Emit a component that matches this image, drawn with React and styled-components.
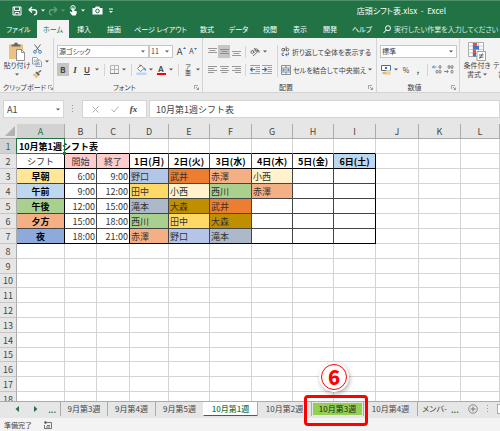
import React from "react";
import styled, { createGlobalStyle, ThemeProvider } from "styled-components";

const theme = {
	green: "#217346",
	ribbon: "#f3f3f3",
	chrome: "#e6e6e6",
	line: "#d4d4d4",
	header: "#ababab",
	selected: "#d2d2d2",
	pressed: "#c5c5c5",
	text: "#444444",
	red: "#ff0000"
};

const GlobalStyle = createGlobalStyle`
	* {
		box-sizing: border-box;
	}
	body {
		margin: 0;
		background: #ffffff;
		font-family: "Noto Sans CJK JP", "Noto Sans", sans-serif;
		font-size: 9px;
		color: #444444;
	}
	button, input, select {
		margin: 0;
		padding: 0;
		border: 0;
		border-radius: 0;
		outline: none;
		background: none;
		font: inherit;
		color: inherit;
	}
	svg {
		display: block;
		flex: none;
	}
`;

const Window = styled.div`
	display: flex;
	flex-direction: column;
	height: 100vh;
	overflow: hidden;
`;

/* Title bar */

const TitleBar = styled.header`
	flex: none;
	display: flex;
	align-items: center;
	height: 20px;
	padding: 0 54px 0 11px;
	border-top: 1px solid #4d9069;
	background: ${props => props.theme.green};
	color: #ffffff;
	font-size: 7px;
	font-feature-settings: "palt";
`;

const QuickAccess = styled.div`
	display: flex;
	gap: 4px;
`;

const Title = styled.h1`
	margin: 0 0 0 auto;
	font-size: 8px;
	font-weight: normal;
	white-space: nowrap;
`;

const ToolSet = styled.div`
	display: flex;
	align-items: center;
`;

const Tool = styled.button`
	flex: none;
	display: flex;
	align-items: center;
	justify-content: center;
	width: 12px;
	height: 13px;
	background: ${props => props.$pressed ? props.theme.pressed : "none"};
	opacity: ${props => props.$disabled ? 0.3 : 1};
`;

const CaretButton = styled(Tool)`
	width: 8px;
`;

/* Ribbon tabs */

const TabBar = styled.nav`
	flex: none;
	display: flex;
	height: 18px;
	background: ${props => props.theme.green};
	color: #ffffff;
	font-size: 7px;
	font-feature-settings: "palt";
`;

const RibbonTab = styled.button`
	flex: none;
	width: ${props => props.$width || 30}px;
	background: ${props => props.$active ? props.theme.ribbon : "none"};
	color: ${props => props.$active ? props.theme.green : "#ffffff"};
	text-align: center;
	white-space: nowrap;
`;

const TellMe = styled.label`
	flex: 1;
	display: flex;
	align-items: center;
	gap: 3px;
	min-width: 0;
	padding-left: 4px;
`;

const TellMeInput = styled.input`
	flex: 1;
	min-width: 0;
	font-feature-settings: "palt";
	&::placeholder {
		color: #dcebe2;
		opacity: 1;
	}
`;

/* Ribbon */

const Ribbon = styled.section`
	flex: none;
	display: flex;
	height: 55px;
	overflow: hidden;
	background: ${props => props.theme.ribbon};
	border-bottom: 1px solid ${props => props.theme.line};
	font-size: 7px;
	font-feature-settings: "palt";
`;

const Group = styled.div`
	flex: none;
	display: flex;
	flex-direction: column;
	justify-content: space-between;
	padding: 4px 2px 0 3px;
	border-right: 1px solid ${props => props.theme.line};
	width: ${props => props.$width}px;
`;

const GroupBody = styled.div`
	display: flex;
`;

const Rows = styled.div`
	display: flex;
	flex-direction: column;
	gap: 5px;
	padding-top: 3px;
`;

const IconColumn = styled.div`
	display: flex;
	flex-direction: column;
	justify-content: space-between;
	height: 39px;
`;

const GroupFooter = styled.div`
	display: flex;
	align-items: center;
	height: 10px;
`;

const GroupName = styled.span`
	flex: 1;
	text-align: center;
	line-height: 10px;
	white-space: nowrap;
`;

const Divider = styled.span`
	flex: none;
	width: 1px;
	height: ${props => props.$tall ? 32 : 12}px;
	margin: ${props => props.$tall ? "3px 3px 0 4px" : "0 3px"};
	background: ${props => props.theme.line};
`;

const BigButton = styled.button`
	flex: none;
	display: flex;
	flex-direction: column;
	align-items: center;
	width: ${props => props.$wide ? 48 : 28}px;
	line-height: 9px;
	white-space: nowrap;
`;

const BigLabel = styled.span`
	display: flex;
	align-items: center;
	justify-content: center;
	gap: 2px;
	height: 9px;
`;

const Combo = styled.div`
	flex: none;
	display: flex;
	align-items: center;
	width: ${props => props.$width}px;
	height: 13px;
	padding-right: 3px;
	border: 1px solid #c6c6c6;
	background: #ffffff;
`;

const ComboSelect = styled.select`
	flex: 1;
	min-width: 0;
	height: 11px;
	padding-left: 1px;
	appearance: none;
	font-feature-settings: "palt";
	line-height: 11px;
`;

const SizeTools = styled(ToolSet)`
	margin-left: 2px;
`;

const TextTool = styled.button`
	display: flex;
	align-items: center;
	gap: 2px;
	height: 13px;
	white-space: nowrap;
	font-feature-settings: "palt";
`;

/* Formula bar */

const FormulaBar = styled.section`
	flex: none;
	display: flex;
	padding: 7px 0 6px 3px;
	background: ${props => props.theme.chrome};
`;

const FormulaBox = styled.div`
	flex: ${props => props.$width ? "none" : 1};
	display: flex;
	align-items: center;
	justify-content: space-around;
	width: ${props => props.$width ? `${props.$width}px` : "auto"};
	height: 18px;
	padding: 0 3px;
	border: 1px solid ${props => props.theme.line};
	background: #ffffff;
`;

const Grip = styled.span`
	flex: none;
	display: flex;
	align-items: center;
	justify-content: center;
	width: ${props => props.$width}px;
`;

const BarInput = styled.input`
	flex: 1;
	min-width: 0;
	height: 16px;
	padding-left: ${props => props.$inset || 0}px;
`;

/* Worksheet */

const Sheet = styled.main`
	flex: 1;
	min-height: 0;
	overflow: hidden;
	background: #ffffff;
`;

const Grid = styled.table`
	width: 100%;
	table-layout: fixed;
	border-collapse: separate;
	border-spacing: 0;
	line-height: 13px;
	white-space: nowrap;
`;

const Col = styled.col`
	width: ${props => props.$width ? `${props.$width}px` : "auto"};
`;

const rowHeight = props => props.$short ? 14 : 15;

const HeadCell = styled.th`
	height: ${rowHeight}px;
	padding: 0;
	border-right: 1px solid ${props => props.theme.header};
	border-bottom: 1px solid ${props => props.$selected ? props.theme.green : props.theme.header};
	background: ${props => props.$selected ? props.theme.selected : props.theme.chrome};
	color: ${props => props.$selected ? props.theme.green : props.theme.text};
	font-weight: normal;
`;

const RowHead = styled(HeadCell)`
	border-bottom-color: #c6c6c6;
`;

const Corner = styled(HeadCell)`
	border-right-color: ${props => props.theme.chrome};
	& svg {
		margin: 0 1px 1px auto;
	}
`;

const Cell = styled.td`
	height: ${rowHeight}px;
	padding: 0 1px;
	overflow: hidden;
	border-right: 1px solid ${props => props.$right || props.theme.line};
	border-bottom: 1px solid ${props => props.$bottom || props.theme.line};
	background: ${props => props.$bg || "none"};
	color: ${props => props.$bold ? "#000000" : "#333333"};
	font-weight: ${props => props.$bold ? "bold" : "normal"};
	text-align: ${props => props.$align || "left"};
`;

const ActiveCell = styled(Cell)`
	position: relative;
	overflow: visible;
	padding-left: 2px;
	&::before {
		content: "";
		position: absolute;
		inset: -1px;
		border: 1px solid ${props => props.theme.green};
	}
	&::after {
		content: "";
		position: absolute;
		right: -2px;
		bottom: -2px;
		width: 3px;
		height: 3px;
		background: ${props => props.theme.green};
	}
`;

/* Sheet tabs and status bar */

const SheetBar = styled.nav`
	position: relative;
	flex: none;
	display: flex;
	height: 17px;
	border-top: 1px solid ${props => props.theme.header};
	background: ${props => props.theme.chrome};
	font-size: 8px;
`;

const SheetNav = styled.div`
	flex: none;
	display: flex;
	align-items: center;
	justify-content: space-between;
	width: 60px;
	padding: 0 4px 2px 11px;
	color: ${props => props.theme.green};
`;

const SheetSlot = styled.div`
	position: relative;
	flex: none;
	width: ${props => props.$width}px;
	height: 14px;
	padding: 1px;
	border-left: 1px solid ${props => props.$active ? "#ffffff" : props.theme.header};
	border-bottom: ${props => props.$active ? `1px solid ${props.theme.green}` : "0"};
	background: ${props => props.$active ? "#ffffff" : "none"};
`;

const SheetTab = styled.button`
	display: block;
	width: 100%;
	height: 12px;
	background: ${props => props.$marked ? "#92d050" : "none"};
	color: ${props => props.$active ? props.theme.green : props.$marked ? "#222222" : props.theme.text};
	font-weight: ${props => props.$active ? 500 : "normal"};
	line-height: 12px;
	white-space: nowrap;
	font-feature-settings: ${props => props.$tight ? "\"palt\"" : "normal"};
`;

const SheetTools = styled.div`
	flex: 1;
	display: flex;
	align-items: center;
	gap: 8px;
	padding-bottom: 2px;
	overflow: hidden;
	color: ${props => props.theme.green};
`;

const ScrollButton = styled(Tool)`
	height: 10px;
	border: 1px solid ${props => props.theme.header};
	background: #ffffff;
`;

const Callout = styled.div`
	position: absolute;
	z-index: 1;
	top: -7px;
	left: -8px;
	width: 64px;
	height: 31px;
	border: 3px solid ${props => props.theme.red};
	border-radius: 4px;
	pointer-events: none;
`;

const Badge = styled.div`
	position: absolute;
	z-index: 2;
	top: -40px;
	left: 7px;
	width: 30px;
	height: 30px;
	padding: 2px;
	border-radius: 50%;
	background: #ffffff;
	box-shadow: 1px 2px 4px rgba(0, 0, 0, 0.3);
	pointer-events: none;
`;

const BadgeRing = styled.div`
	height: 26px;
	border: 1px solid ${props => props.theme.red};
	border-radius: 50%;
	color: ${props => props.theme.red};
	font-size: 20px;
	font-weight: 900;
	line-height: 23px;
	text-align: center;
`;

const StatusBar = styled.footer`
	flex: none;
	display: flex;
	align-items: center;
	gap: 12px;
	height: 13px;
	padding-left: 4px;
	background: ${props => props.theme.ribbon};
	font-size: 7px;
`;

/* Icons */

const Caret = ({ color = "#555555" }) => (
	<svg width="4" height="3" viewBox="0 0 4 3"><path d="M0 0.5h4L2 2.5z" fill={color} /></svg>
);

const GripDots = () => (
	<svg width="2" height="8" viewBox="0 0 2 8" fill="#999999"><path d="M0 0h1v1H0zM0 3h1v1H0zM0 6h1v1H0z" /></svg>
);

const Launcher = () => (
	<svg width="5" height="5" viewBox="0 0 5 5" fill="none" stroke="#777777" strokeWidth="0.7">
		<path d="M0.4 4V0.4H4M2 2l2.4 2.4M4.5 2.5v2h-2" />
	</svg>
);

const SaveIcon = () => (
	<svg width="10" height="10" viewBox="0 0 10 10" fill="none" stroke="#ffffff">
		<path d="M1 1h8v8H1zM2.5 1v3.5h5V1M3 9V6.5h4V9" />
	</svg>
);

const UndoIcon = () => (
	<svg width="10" height="10" viewBox="0 0 10 10" fill="none" stroke="#ffffff" strokeWidth="1.4">
		<path d="M4 1L1.2 3.7 4 6.4M1.5 3.7H6a2.6 2.6 0 0 1 0 5.2" />
	</svg>
);

const RedoIcon = () => (
	<svg width="10" height="10" viewBox="0 0 10 10" fill="none" stroke="#ffffff" strokeWidth="1.4">
		<path d="M6 1l2.8 2.7L6 6.4M8.5 3.7H4a2.6 2.6 0 0 0 0 5.2" />
	</svg>
);

const TouchIcon = () => (
	<svg width="9" height="11" viewBox="0 0 9 11">
		<circle cx="4" cy="2.8" r="2.2" fill="none" stroke="#ffffff" />
		<path d="M3.2 2.5h1.5v3l3 0.8v2L6.5 10.5H3.2L0.6 7l1-0.6 1.6 1z" fill="#ffffff" />
	</svg>
);

const CameraIcon = () => (
	<svg width="11" height="9" viewBox="0 0 11 9">
		<path d="M0.5 2h2.3L4 0.5h3L8.2 2h2.3v6.5h-10z" fill="#ffffff" />
		<circle cx="5.5" cy="5" r="1.8" fill="none" stroke="#217346" />
	</svg>
);

const CustomizeIcon = () => (
	<svg width="4" height="6" viewBox="0 0 4 6" fill="#ffffff"><path d="M0 0.5h4v1H0zM0 3h4L2 5z" /></svg>
);

const SearchIcon = () => (
	<svg width="8" height="9" viewBox="0 0 8 9" fill="none" stroke="#ffffff">
		<circle cx="5" cy="3.2" r="2.5" /><path d="M3.2 5L0.6 8" />
	</svg>
);

const PasteIcon = () => (
	<svg width="18" height="19" viewBox="0 0 18 19">
		<path d="M1 2.5h14V17H1z" fill="#eac282" />
		<path d="M3.5 4.5v-2H6a2 2 0 0 1 4 0h2.5v2z" fill="#666666" />
		<path d="M8.5 7.5h5l3 3v8h-8z" fill="#ffffff" stroke="#777777" strokeWidth="0.8" />
		<path d="M13.5 7.5v3h3" fill="none" stroke="#777777" strokeWidth="0.8" />
	</svg>
);

const CutIcon = () => (
	<svg width="9" height="10" viewBox="0 0 9 10" fill="none">
		<path d="M1.5 0.5l4.8 6.3M7.5 0.5L2.7 6.8" stroke="#666666" />
		<circle cx="2" cy="7.8" r="1.4" stroke="#4a7ebb" /><circle cx="7" cy="7.8" r="1.4" stroke="#4a7ebb" />
	</svg>
);

const CopyIcon = () => (
	<svg width="10" height="10" viewBox="0 0 10 10" fill="#ffffff" stroke="#7f8a96" strokeWidth="0.8">
		<path d="M0.5 0.5h4l1.5 1.5v5h-5.5zM4 3h3.5l2 2v4.5H4z" />
		<path d="M5.2 6h3M5.2 7.7h3M1.6 3h1.6M1.6 4.7h1.6" stroke="#4a7ebb" strokeWidth="0.6" />
	</svg>
);

const BrushIcon = () => (
	<svg width="10" height="9" viewBox="0 0 10 9">
		<path d="M0.5 4.5L3.5 3 6.5 6 4.5 8.5z" fill="#eac282" />
		<path d="M3.5 2.5l1.3-1 3 3-1.2 1.3z" fill="#555555" /><path d="M6.5 2.5L9 0.5" stroke="#666666" strokeWidth="1.5" />
	</svg>
);

const BoldIcon = styled.b`
	font-family: Inter, sans-serif;
	font-size: 8px;
`;

const ItalicIcon = styled.i`
	font-family: "Liberation Serif", serif;
	font-size: 9px;
	font-weight: bold;
`;

const UnderlineIcon = styled.u`
	font-family: Inter, sans-serif;
	font-size: 8px;
	font-weight: 600;
`;

const BordersIcon = () => (
	<svg width="9" height="9" viewBox="0 0 9 9" fill="none" stroke="#b4b4b4">
		<path d="M0.5 0.5h8v8h-8zM4.5 0.5v8M0.5 4.5h8" /><path d="M0 8.5h9" stroke="#888888" />
	</svg>
);

const FillIcon = () => (
	<svg width="11" height="11" viewBox="0 0 11 11">
		<path d="M1.5 4.5L5 1l3 3.5L4.5 7.5z" fill="#ffffff" stroke="#666666" strokeWidth="0.8" />
		<path d="M4 3V0.5" stroke="#666666" strokeWidth="0.8" /><path d="M8.2 3.5c2 1 1.8 2.5 1.4 3.5-0.8 0-1.4-1.5-1.4-3.5z" fill="#2f75b5" />
		<path d="M0.5 8.5h10V11h-10z" fill="#bdd7ee" />
	</svg>
);

const FontColorTool = styled.span`
	display: flex;
	align-items: center;
	justify-content: center;
	width: 9px;
	height: 11px;
	border-bottom: 2px solid ${props => props.theme.red};
	font-family: Inter, sans-serif;
	font-size: 8px;
	font-weight: 600;
`;

const FontSizeMark = styled.span`
	display: flex;
	font-family: Inter, sans-serif;
	font-size: ${props => props.$small ? 7 : 9}px;
`;

const SizeArrow = ({ down }) => (
	<svg width="3" height="4" viewBox="0 0 3 4"><path d={down ? "M0 1h3L1.5 3z" : "M0 3h3L1.5 1z"} fill="#2f75b5" /></svg>
);

const PhoneticIcon = styled.span`
	width: 6px;
	font-size: 6px;
	font-feature-settings: normal;
	line-height: 6px;
	word-break: break-all;
`;

const linePaths = {
	top: "M0 1.5h9M1.5 3.5h6M0 5.5h9",
	middle: "M0 2.5h9M1.5 4.5h6M0 6.5h9",
	bottom: "M0 4.5h9M1.5 6.5h6M0 8.5h9",
	left: "M0 1.5h9M0 3.5h6M0 5.5h9M0 7.5h6",
	center: "M0 1.5h9M1.5 3.5h6M0 5.5h9M1.5 7.5h6",
	right: "M0 1.5h9M3 3.5h6M0 5.5h9M3 7.5h6"
};

const LinesIcon = ({ kind }) => (
	<svg width="9" height="10" viewBox="0 0 9 10"><path d={linePaths[kind]} stroke="#808080" strokeWidth="0.8" /></svg>
);

const IndentIcon = ({ increase }) => (
	<svg width="10" height="9" viewBox="0 0 10 9">
		<path d="M0 0.5h10M5.5 2.5H10M5.5 4.5H10M5.5 6.5H10M0 8.5h10" stroke="#888888" strokeWidth="0.8" />
		<path d={increase ? "M0 4.5h4M2.5 2.5l2 2-2 2" : "M5 4.5H1M2.5 2.5l-2 2 2 2"} fill="none" stroke="#2f75b5" strokeWidth="1.2" />
	</svg>
);

const OrientationIcon = () => (
	<svg width="10" height="10" viewBox="0 0 10 10" fill="none" stroke="#666666" strokeWidth="0.9">
		<circle cx="2.3" cy="5" r="1.4" /><path d="M2.5 3l2 2.5M4 1l2.7 3.2" /><circle cx="6.2" cy="3" r="1.3" />
		<path d="M3 9l6-5.5M6.8 3.5H9v2.2" />
	</svg>
);

const WrapIcon = () => (
	<svg width="9" height="11" viewBox="0 0 9 11" fill="none" stroke="#666666" strokeWidth="0.9">
		<circle cx="2" cy="3.7" r="1.3" /><path d="M3.5 2.2V5.2M5.2 0.5v4.7" /><circle cx="6.6" cy="3.7" r="1.3" />
		<path d="M3 7.2H1.2v2.3H3" /><path d="M7.5 6.5v2.2h-3M6 7.2L4.5 8.7 6 10.2" stroke="#2f75b5" />
	</svg>
);

const MergeIcon = () => (
	<svg width="10" height="10" viewBox="0 0 10 10" fill="none" stroke="#777777" strokeWidth="0.8">
		<path d="M0.5 0.5h9v9h-9zM0.5 3h9M0.5 7h9M5 0.5V3M5 7v2.5" />
		<path d="M1.5 5h7M3 4L1.7 5 3 6M7 4l1.3 1L7 6" stroke="#2f75b5" />
	</svg>
);

const CurrencyIcon = () => (
	<svg width="11" height="10" viewBox="0 0 11 10">
		<path d="M0.5 0.5h9v5h-9z" fill="#ffffff" stroke="#2f75b5" /><circle cx="5" cy="3" r="1.2" fill="#2f75b5" />
		<path d="M5 5h4.5v4.5H5z" fill="#eac282" /><ellipse cx="3.5" cy="8" rx="2.3" ry="1.3" fill="#eab464" />
		<path d="M5 6.5h4.5M5 8h4.5" stroke="#ffffff" strokeWidth="0.5" />
	</svg>
);

const DecimalIcon = ({ decrease }) => (
	<svg width="10" height="9" viewBox="0 0 10 9" fill="none" strokeWidth="0.8">
		<path d={decrease ? "M0 6.5h4M2.8 5l1.5 1.5L2.8 8" : "M4.5 2H0.7M2 0.5L0.5 2 2 3.5"} stroke="#2f75b5" />
		<g stroke="#666666">
			<ellipse cx="8" cy="2" rx="1" ry="1.5" /><ellipse cx="8" cy="6.7" rx="1" ry="1.5" />
			<ellipse cx="5" cy={decrease ? 2 : 6.7} rx="1" ry="1.5" />
		</g>
	</svg>
);

const ConditionalIcon = () => (
	<svg width="18" height="19" viewBox="0 0 18 19">
		<path d="M0.5 0.5h15v14h-15z" fill="#ffffff" stroke="#999999" strokeWidth="0.8" />
		<path d="M0.5 4h15M0.5 7.5h15M0.5 11h15M5 0.5v14M10.5 0.5v14" stroke="#aaaaaa" strokeWidth="0.6" />
		<path d="M5 1h4v3H5zM5 7.5h3V11H5z" fill="#e8513d" /><path d="M5 4h6v3.5H5zM5 11h3v3.5H5z" fill="#4472c4" />
		<path d="M9 9.5h8.5v9H9z" fill="#ffffff" stroke="#888888" strokeWidth="0.8" />
		<path d="M11 13h4.5M11 15.2h4.5M14.7 11.3l-3 5.5" stroke="#444444" strokeWidth="0.8" />
	</svg>
);

const TableStyleIcon = () => (
	<svg width="18" height="19" viewBox="0 0 18 19">
		<path d="M0.5 0.5h16v14h-16z" fill="#ffffff" stroke="#999999" strokeWidth="0.8" /><path d="M4 4h12v10H4z" fill="#9dc3e6" />
	</svg>
);

/* Data */

const ribbonTabs = [
	["ファイル", 37], ["ホーム", 32], ["挿入"], ["描画"], ["ページ レイアウト", 63], ["数式"],
	["データ", 33], ["校閲"], ["表示"], ["開発"], ["ヘルプ", 34]
];

const columns = [
	["A", 48], ["B", 32], ["C", 33], ["D", 39], ["E", 41], ["F", 42],
	["G", 41], ["H", 41], ["I", 42], ["J", 43], ["K", 42], ["L"]
];

const staffColors = {
	"野口": "#b4c6e7",
	"武井": "#ed7d31",
	"赤澤": "#f4b084",
	"小西": "#fff2cc",
	"田中": "#ffd966",
	"西川": "#a9d08e",
	"滝本": "#adb9ca",
	"大森": "#bf8f00"
};

const days = ["1日(月)", "2日(火)", "3日(水)", "4日(木)", "5日(金)", "6日(土)"];

const shifts = [
	{ name: "早朝", color: "#ffe699", from: "6:00", to: "9:00", staff: ["野口", "武井", "赤澤", "小西", "", ""] },
	{ name: "午前", color: "#bdd7ee", from: "9:00", to: "12:00", staff: ["田中", "小西", "西川", "赤澤", "", ""] },
	{ name: "午後", color: "#a9d08e", from: "12:00", to: "15:00", staff: ["滝本", "大森", "武井", "", "", ""] },
	{ name: "夕方", color: "#f4b084", from: "15:00", to: "18:00", staff: ["西川", "田中", "大森", "", "", ""] },
	{ name: "夜", color: "#8ea9db", from: "18:00", to: "21:00", staff: ["赤澤", "野口", "滝本", "", "", ""] }
];

const sheets = [
	{ name: "9月第3週", width: 47 },
	{ name: "9月第4週", width: 48 },
	{ name: "9月第5週", width: 48 },
	{ name: "10月第1週", width: 54, active: true },
	{ name: "10月第2週", width: 54 },
	{ name: "10月第3週", width: 52, marked: true },
	{ name: "10月第4週", width: 54 },
	{ name: "メンバ-", width: 34, tight: true }
];

const thin = "#444444";
const thick = "#000000";
const emptyRows = [8, 9, 10, 11, 12, 13, 14, 15, 16, 17, 18];

const Footer = ({ name, launcher = true }) => (
	<GroupFooter>
		<GroupName>{name}</GroupName>
		{launcher && <CaretButton aria-label={`${name}の設定`}><Launcher /></CaretButton>}
	</GroupFooter>
);

const Drop = ({ label, color }) => (
	<CaretButton aria-label={label}><Caret color={color} /></CaretButton>
);

const RibbonPanel = () => (
	<Ribbon>
		<Group $width={54}>
			<GroupBody>
				<BigButton>
					<PasteIcon />
					<BigLabel>貼り付け</BigLabel>
					<BigLabel><Caret /></BigLabel>
				</BigButton>
				<IconColumn>
					<Tool aria-label="切り取り"><CutIcon /></Tool>
					<ToolSet>
						<Tool aria-label="コピー"><CopyIcon /></Tool>
						<Drop label="コピーの種類" />
					</ToolSet>
					<Tool aria-label="書式のコピー"><BrushIcon /></Tool>
				</IconColumn>
			</GroupBody>
			<Footer name="クリップボード" />
		</Group>
		<Group $width={149}>
			<Rows>
				<ToolSet>
					<Combo $width={92}>
						<ComboSelect aria-label="フォント"><option>源ゴシック</option></ComboSelect>
						<Caret />
					</Combo>
					<Combo $width={24}>
						<ComboSelect aria-label="フォント サイズ"><option>11</option></ComboSelect>
						<Caret />
					</Combo>
					<SizeTools>
						<Tool aria-label="拡大"><FontSizeMark>A<SizeArrow /></FontSizeMark></Tool>
						<Tool aria-label="縮小"><FontSizeMark $small>A<SizeArrow down /></FontSizeMark></Tool>
					</SizeTools>
				</ToolSet>
				<ToolSet>
					<Tool aria-label="太字" $pressed><BoldIcon>B</BoldIcon></Tool>
					<Tool aria-label="斜体"><ItalicIcon>I</ItalicIcon></Tool>
					<Tool aria-label="下線"><UnderlineIcon>U</UnderlineIcon></Tool>
					<Drop label="下線の種類" />
					<Divider />
					<Tool aria-label="罫線"><BordersIcon /></Tool>
					<Drop label="罫線の種類" />
					<Divider />
					<Tool aria-label="塗りつぶし"><FillIcon /></Tool>
					<Drop label="塗りつぶしの色" />
					<Tool aria-label="文字色"><FontColorTool>A</FontColorTool></Tool>
					<Drop label="文字の色" />
					<Divider />
					<Tool aria-label="ふりがな"><PhoneticIcon>ア亜</PhoneticIcon></Tool>
					<Drop label="ふりがなの設定" />
				</ToolSet>
			</Rows>
			<Footer name="フォント" />
		</Group>
		<Group $width={174}>
			<GroupBody>
				<Rows>
					<ToolSet>
						<Tool aria-label="上揃え"><LinesIcon kind="top" /></Tool>
						<Tool aria-label="上下中央揃え" $pressed><LinesIcon kind="middle" /></Tool>
						<Tool aria-label="下揃え"><LinesIcon kind="bottom" /></Tool>
						<Divider />
						<Tool aria-label="方向"><OrientationIcon /></Tool>
						<Drop label="方向の種類" />
					</ToolSet>
					<ToolSet>
						<Tool aria-label="左揃え"><LinesIcon kind="left" /></Tool>
						<Tool aria-label="中央揃え"><LinesIcon kind="center" /></Tool>
						<Tool aria-label="右揃え"><LinesIcon kind="right" /></Tool>
						<Divider />
						<Tool aria-label="インデントを減らす"><IndentIcon /></Tool>
						<Tool aria-label="インデントを増やす"><IndentIcon increase /></Tool>
					</ToolSet>
				</Rows>
				<Divider $tall />
				<Rows>
					<TextTool><WrapIcon />折り返して全体を表示する</TextTool>
					<ToolSet>
						<TextTool><MergeIcon />セルを結合して中央揃え</TextTool>
						<Drop label="結合の種類" />
					</ToolSet>
				</Rows>
			</GroupBody>
			<Footer name="配置" />
		</Group>
		<Group $width={83}>
			<Rows>
				<Combo $width={77}>
					<ComboSelect aria-label="表示形式"><option>標準</option></ComboSelect>
					<Caret />
				</Combo>
				<ToolSet>
					<Tool aria-label="通貨"><CurrencyIcon /></Tool>
					<Drop label="通貨の種類" />
					<Tool aria-label="パーセント">%</Tool>
					<Tool aria-label="桁区切り"><b>,</b></Tool>
					<Divider />
					<Tool aria-label="小数点以下を増やす"><DecimalIcon /></Tool>
					<Tool aria-label="小数点以下を減らす"><DecimalIcon decrease /></Tool>
				</ToolSet>
			</Rows>
			<Footer name="数値" />
		</Group>
		<Group $width={160}>
			<GroupBody>
				<BigButton>
					<ConditionalIcon />
					<BigLabel>条件付き</BigLabel>
					<BigLabel>書式<Caret /></BigLabel>
				</BigButton>
				<BigButton $wide>
					<TableStyleIcon />
					<BigLabel>テーブルとして</BigLabel>
					<BigLabel>書式設定<Caret /></BigLabel>
				</BigButton>
			</GroupBody>
			<Footer name="スタイル" launcher={false} />
		</Group>
	</Ribbon>
);

const Worksheet = () => (
	<Sheet>
		<Grid>
			<colgroup>
				<Col $width={17} />
				{columns.map(([name, width]) => <Col key={name} $width={width} />)}
			</colgroup>
			<thead>
				<tr>
					<Corner>
						<svg width="10" height="10" viewBox="0 0 10 10"><path d="M10 0v10H0z" fill="#b2b2b2" /></svg>
					</Corner>
					{columns.map(([name]) => <HeadCell key={name} $selected={name === "A"}>{name}</HeadCell>)}
				</tr>
			</thead>
			<tbody>
				<tr>
					<RowHead $selected>1</RowHead>
					<ActiveCell $bold>10月第1週シフト表</ActiveCell>
					<Cell $right="transparent" $bottom={thick} />
					<Cell $bottom={thick} />
					{days.map(day => <Cell key={day} $bottom={thick} />)}
					<Cell /><Cell /><Cell />
				</tr>
				<tr>
					<RowHead>2</RowHead>
					<Cell $align="center" $right={thick} $bottom={thick}>シフト</Cell>
					<Cell $align="center" $bg="#ffcccc" $right={thin} $bottom={thick}>開始</Cell>
					<Cell $align="center" $bg="#ffcccc" $right={thick} $bottom={thick}>終了</Cell>
					{days.map((day, i) => (
						<Cell key={day} $bold $align="center" $right={i === 5 ? thick : thin} $bottom={thick} $bg={i === 5 ? "#bdd7ee" : null}>
							{day}
						</Cell>
					))}
					<Cell /><Cell /><Cell />
				</tr>
				{shifts.map((shift, row) => {
					const bottom = row === shifts.length - 1 ? thick : thin;
					return (
						<tr key={shift.name}>
							<RowHead>{row + 3}</RowHead>
							<Cell $bold $align="center" $bg={shift.color} $right={thick} $bottom={bottom}>{shift.name}</Cell>
							<Cell $align="right" $right={thin} $bottom={bottom}>{shift.from}</Cell>
							<Cell $align="right" $right={thick} $bottom={bottom}>{shift.to}</Cell>
							{shift.staff.map((name, i) => (
								<Cell key={days[i]} $bg={staffColors[name]} $right={i === 5 ? thick : thin} $bottom={bottom}>{name}</Cell>
							))}
							<Cell /><Cell /><Cell />
						</tr>
					);
				})}
				{emptyRows.map(row => {
					const short = row % 5 === 0;
					return (
						<tr key={row}>
							<RowHead $short={short}>{row}</RowHead>
							{columns.map(([name]) => <Cell key={name} $short={short} />)}
						</tr>
					);
				})}
			</tbody>
		</Grid>
	</Sheet>
);

const SheetTabs = () => (
	<SheetBar>
		<SheetNav>
			<Tool aria-label="前のシート"><svg width="4" height="6" viewBox="0 0 4 6"><path d="M4 0v6L0.5 3z" fill="#217346" /></svg></Tool>
			<Tool aria-label="次のシート"><svg width="4" height="6" viewBox="0 0 4 6"><path d="M0 0v6L3.5 3z" fill="#217346" /></svg></Tool>
			<b>...</b>
		</SheetNav>
		{sheets.map(sheet => (
			<SheetSlot key={sheet.name} $width={sheet.width} $active={sheet.active}>
				<SheetTab $active={sheet.active} $marked={sheet.marked} $tight={sheet.tight}>{sheet.name}</SheetTab>
				{sheet.marked && <Callout />}
				{sheet.marked && <Badge><BadgeRing>6</BadgeRing></Badge>}
			</SheetSlot>
		))}
		<SheetTools>
			<b>...</b>
			<Tool aria-label="新しいシート">
				<svg width="10" height="10" viewBox="0 0 10 10" fill="none" stroke="#777777">
					<circle cx="5" cy="5" r="4.3" strokeWidth="0.8" /><path d="M5 2.5v5M2.5 5h5" />
				</svg>
			</Tool>
			<GripDots />
			<ScrollButton aria-label="左へスクロール">
				<svg width="4" height="6" viewBox="0 0 4 6"><path d="M4 0v6L0.5 3z" fill="#666666" /></svg>
			</ScrollButton>
		</SheetTools>
	</SheetBar>
);

const App = () => (
	<ThemeProvider theme={theme}>
		<GlobalStyle />
		<Window lang="ja">
			<TitleBar>
				<QuickAccess>
					<Tool aria-label="上書き保存"><SaveIcon /></Tool>
					<ToolSet>
						<Tool aria-label="元に戻す"><UndoIcon /></Tool>
						<Drop label="元に戻す履歴" color="#ffffff" />
						<Tool aria-label="やり直し" $disabled><RedoIcon /></Tool>
						<CaretButton aria-label="やり直し履歴" $disabled><Caret color="#ffffff" /></CaretButton>
						<Tool aria-label="タッチ/マウス モード"><TouchIcon /></Tool>
						<Drop label="モードの種類" color="#ffffff" />
					</ToolSet>
					<Tool aria-label="カメラ"><CameraIcon /></Tool>
					<CaretButton aria-label="ユーザー設定"><CustomizeIcon /></CaretButton>
				</QuickAccess>
				<Title>店頭シフト表.xlsx&nbsp; - &nbsp;Excel</Title>
			</TitleBar>
			<TabBar>
				{ribbonTabs.map(([name, width]) => (
					<RibbonTab key={name} $width={width} $active={name === "ホーム"}>{name}</RibbonTab>
				))}
				<TellMe>
					<SearchIcon />
					<TellMeInput aria-label="操作アシスト" placeholder="実行したい作業を入力してください" />
				</TellMe>
			</TabBar>
			<RibbonPanel />
			<FormulaBar>
				<FormulaBox $width={61}>
					<BarInput aria-label="名前ボックス" defaultValue="A1" />
					<Caret />
				</FormulaBox>
				<Grip $width={18}><GripDots /></Grip>
				<FormulaBox $width={65}>
					<Tool aria-label="キャンセル">
						<svg width="7" height="7" viewBox="0 0 7 7"><path d="M0.5 0.5l6 6M6.5 0.5l-6 6" stroke="#b0b0b0" /></svg>
					</Tool>
					<Tool aria-label="入力">
						<svg width="8" height="7" viewBox="0 0 8 7"><path d="M0.5 3.5L3 6l4.5-5.5" fill="none" stroke="#b0b0b0" /></svg>
					</Tool>
					<Tool aria-label="関数の挿入"><ItalicIcon>fx</ItalicIcon></Tool>
				</FormulaBox>
				<Grip $width={2} />
				<FormulaBox>
					<BarInput aria-label="数式バー" defaultValue="10月第1週シフト表" $inset={3} />
				</FormulaBox>
			</FormulaBar>
			<Worksheet />
			<SheetTabs />
			<StatusBar>
				<span>準備完了</span>
				<svg width="8" height="8" viewBox="0 0 8 8" fill="none" stroke="#555555">
					<path d="M3 1.5h4.5v6h-7V4M3 4.5h3M2 6h4" strokeWidth="0.8" /><circle cx="1.5" cy="1.5" r="1.3" fill="#555555" stroke="none" />
				</svg>
			</StatusBar>
		</Window>
	</ThemeProvider>
);

export default App;
